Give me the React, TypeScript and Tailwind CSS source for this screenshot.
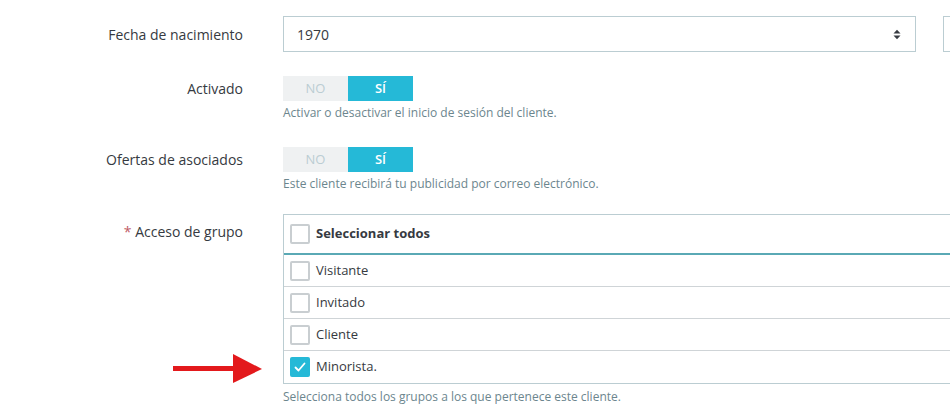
import React from "react";

function Toggle() {
  return (
    <div className="flex h-[25px] w-[130px] text-[13px] font-semibold">
      <div className="flex w-[65px] items-center justify-center bg-[#eff1f2] text-[#bbcdd2] font-normal">NO</div>
      <div className="flex w-[65px] items-center justify-center bg-[#25b9d7] text-white">SÍ</div>
    </div>
  );
}

function Box({ checked }: { checked?: boolean }) {
  if (checked) {
    return (
      <div className="flex h-[20px] w-[20px] shrink-0 items-center justify-center rounded-[2px] bg-[#25b9d7]">
        <svg width="14" height="14" viewBox="0 0 14 14" fill="none">
          <path d="M2.5 7.5 L5.5 10.5 L11.5 3.5" stroke="white" strokeWidth="1.8" strokeLinecap="round" strokeLinejoin="round" />
        </svg>
      </div>
    );
  }
  return <div className="h-[20px] w-[20px] shrink-0 rounded-[2px] border-2 border-[#c9ced1] bg-white" />;
}

function Row({ label, checked, last }: { label: string; checked?: boolean; last?: boolean }) {
  return (
    <div className={`flex h-[32px] items-center gap-[6px] pl-[6px] ${last ? "" : "border-b border-[#cfd4d7]"}`}>
      <Box checked={checked} />
      <span className="text-[13px] text-[#363a41]">{label}</span>
    </div>
  );
}

export default function App() {
  return (
    <div
      className="relative h-[417px] w-[950px] overflow-hidden bg-white text-[#363a41]"
      style={{ fontFamily: '"Open Sans", "Noto Sans", sans-serif' }}
    >
      <div className="flex flex-col pt-[16px]">
        {/* Fecha */}
        <div className="flex items-start">
          <div className="w-[243px] shrink-0 pt-[9px] text-right text-[14px] leading-[20px]">Fecha de nacimiento</div>
          <div className="ml-[40px] flex shrink-0 items-start gap-[27px]">
            <div className="flex h-[36px] w-[633px] items-center justify-between border border-[#bbcdd2] pl-[13px] pr-[14px] text-[14px]">
              <span>1970</span>
              <svg width="8" height="11" viewBox="0 0 8 11">
                <path d="M0.5 4.5 L4 0.8 L7.5 4.5 Z" fill="#363a41" />
                <path d="M0.5 6.5 L4 10.2 L7.5 6.5 Z" fill="#363a41" />
              </svg>
            </div>
            <div className="h-[36px] w-[40px] border border-[#bbcdd2]" />
          </div>
        </div>

        {/* Activado */}
        <div className="mt-[24px] flex items-start">
          <div className="w-[243px] shrink-0 pt-[3px] text-right text-[14px] leading-[20px]">Activado</div>
          <div className="ml-[40px] shrink-0">
            <Toggle />
            <div className="mt-[4px] text-[12px] leading-[16px] text-[#6c868e]">
              Activar o desactivar el inicio de sesión del cliente.
            </div>
          </div>
        </div>

        {/* Ofertas */}
        <div className="mt-[26px] flex items-start">
          <div className="w-[243px] shrink-0 pt-[3px] text-right text-[14px] leading-[20px]">Ofertas de asociados</div>
          <div className="ml-[40px] shrink-0">
            <Toggle />
            <div className="mt-[4px] text-[12px] leading-[16px] text-[#6c868e]">
              Este cliente recibirá tu publicidad por correo electrónico.
            </div>
          </div>
        </div>

        {/* Acceso de grupo */}
        <div className="mt-[22px] flex items-start">
          <div className="w-[243px] shrink-0 pt-[8px] text-right text-[14px] leading-[20px]">
            <span className="text-[#c05c67]">*</span> Acceso de grupo
          </div>
          <div className="ml-[40px] w-[700px] shrink-0">
            <div className="border border-[#bbcdd2]">
              <div className="flex h-[40px] items-center gap-[6px] border-b-2 border-[#5aa9b5] pl-[6px]">
                <Box />
                <span className="text-[13px] font-bold text-[#363a41]">Seleccionar todos</span>
              </div>
              <Row label="Visitante" />
              <Row label="Invitado" />
              <Row label="Cliente" />
              <Row label="Minorista." checked last />
            </div>
            <div className="mt-[5px] text-[12px] leading-[16px] text-[#6c868e]">
              Selecciona todos los grupos a los que pertenece este cliente.
            </div>
          </div>
        </div>
      </div>

      {/* red annotation arrow */}
      <svg className="absolute left-[172px] top-[354px]" width="92" height="30" viewBox="0 0 92 30">
        <rect x="1" y="12" width="62" height="5" fill="#e3191c" />
        <path d="M61 0 L90 15 L61 29 Z" fill="#e3191c" />
      </svg>
    </div>
  );
}
